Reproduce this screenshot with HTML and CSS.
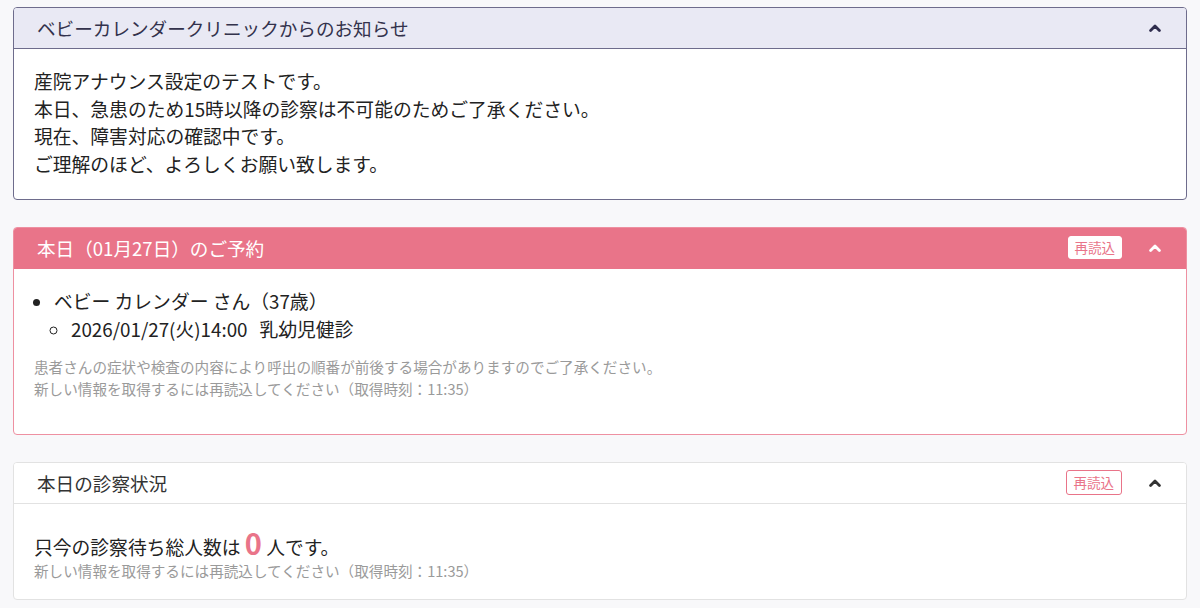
FILE: index.html
```html
<!DOCTYPE html>
<html lang="ja">
<head>
<meta charset="utf-8">
<title>お知らせ</title>
<link rel="stylesheet" href="styles.css">
</head>
<body>
<main class="page">
  <section class="card card-info">
    <header class="card-head">
      <h2 class="card-title">ベビーカレンダークリニックからのお知らせ</h2>
      <div class="head-tools">
        <svg class="chev" viewBox="0 0 12 8" width="12" height="8"><path d="M1.6 6.4 L6 2 L10.4 6.4" fill="none" stroke="currentColor" stroke-width="2.8" stroke-linecap="round" stroke-linejoin="round"/></svg>
      </div>
    </header>
    <div class="card-body info-body">
      <p>産院アナウンス設定のテストです。<br>本日、急患のため15時以降の診察は不可能のためご了承ください。<br>現在、障害対応の確認中です。<br>ご理解のほど、よろしくお願い致します。</p>
    </div>
  </section>

  <section class="card card-resv">
    <header class="card-head">
      <h2 class="card-title">本日（01月27日）のご予約</h2>
      <div class="head-tools">
        <button class="reload reload-solid">再読込</button>
        <svg class="chev" viewBox="0 0 12 8" width="12" height="8"><path d="M1.6 6.4 L6 2 L10.4 6.4" fill="none" stroke="currentColor" stroke-width="2.8" stroke-linecap="round" stroke-linejoin="round"/></svg>
      </div>
    </header>
    <div class="card-body resv-body">
      <ul class="resv-list">
        <li>ベビー カレンダー さん（37歳）
          <ul class="resv-sub">
            <li>2026/01/27(火)14:00<span class="gap"></span>乳幼児健診</li>
          </ul>
        </li>
      </ul>
      <p class="note">患者さんの症状や検査の内容により呼出の順番が前後する場合がありますのでご了承ください。<br>新しい情報を取得するには再読込してください（取得時刻：11:35）</p>
    </div>
  </section>

  <section class="card card-status">
    <header class="card-head">
      <h2 class="card-title">本日の診察状況</h2>
      <div class="head-tools">
        <button class="reload reload-outline">再読込</button>
        <svg class="chev" viewBox="0 0 12 8" width="12" height="8"><path d="M1.6 6.4 L6 2 L10.4 6.4" fill="none" stroke="currentColor" stroke-width="2.8" stroke-linecap="round" stroke-linejoin="round"/></svg>
      </div>
    </header>
    <div class="card-body status-body">
      <p class="wait">只今の診察待ち総人数は <span class="count">0</span> 人です。</p>
      <p class="note">新しい情報を取得するには再読込してください（取得時刻：11:35）</p>
    </div>
  </section>
</main>
</body>
</html>
```
FILE: styles.css
```css
* { box-sizing: border-box; }
html, body { margin: 0; padding: 0; }
body {
  background: #f8f8fa;
  font-family: "Noto Sans CJK JP", "Noto Sans", sans-serif;
  color: #333;
}
.page {
  padding: 7px 13px 0 13px;
  display: flex;
  flex-direction: column;
  gap: 27px;
}
.card {
  background: #fff;
  border: 1px solid #ddd;
  border-radius: 4px;
  overflow: hidden;
}
.card-head {
  height: 41px;
  display: flex;
  align-items: center;
  justify-content: space-between;
  padding: 0 25px 0 23px;
  border-bottom: 1px solid #ddd;
}
.card-title {
  margin: 0;
  font-size: 18.6px;
  font-weight: 400;
  line-height: 1;
}
.head-tools {
  display: flex;
  align-items: center;
  gap: 27px;
}
.chev { display: block; }
.reload {
  font-family: inherit;
  font-size: 13.5px;
  line-height: 1;
  height: 23px;
  padding: 0 6px;
  border-radius: 3px;
  cursor: pointer;
}
.reload-solid {
  background: #fff;
  color: #e97489;
  border: 1px solid #fff;
}
.reload-outline {
  height: 25px;
  padding: 0 7px;
  background: #fff;
  color: #e97489;
  border: 1px solid #e97489;
}

/* info card */
.card-info { border-color: #6e6c8c; }
.card-info .card-head {
  background: #e9e9f4;
  border-bottom-color: #6e6c8c;
  color: #2f2d4e;
}
.card-info .card-title { color: #33324c; }
.info-body { padding: 18px 20px 21px 20px; }
.info-body p {
  margin: 0;
  font-size: 18.8px;
  line-height: 27.7px;
  color: #222;
}

/* reservation card */
.card-resv { border-color: #ee90a1; }
.card-resv .card-head {
  background: #e97489;
  border-bottom-color: #e97489;
  color: #fff;
}
.card-resv .card-title { color: #fff; }
.resv-body { padding: 18px 20px 34px 20px; }
.resv-list {
  margin: 0;
  padding: 0 0 0 20px;
  font-size: 18.8px;
  line-height: 28px;
  color: #222;
}
.resv-sub {
  margin: 0;
  padding: 0 0 0 17px;
  list-style: circle;
}
.gap { display: inline-block; width: 12px; }
.note {
  margin: 0;
  font-size: 14.6px;
  line-height: 22px;
  color: #9a9a9a;
}
.resv-body .note { margin-top: 13px; }

/* status card */
.card-status { border-color: #e2e2e2; }
.card-status .card-head {
  background: #fff;
  border-bottom-color: #e2e2e2;
  color: #333;
}
.status-body { padding: 25px 20px 17px 20px; }
.wait {
  margin: 0;
  font-size: 18.8px;
  line-height: 26px;
  color: #222;
}
.count {
  color: #e97489;
  font-size: 29px;
  font-weight: 700;
  line-height: 26px;
}
.status-body .note { margin-top: 0; }
```
